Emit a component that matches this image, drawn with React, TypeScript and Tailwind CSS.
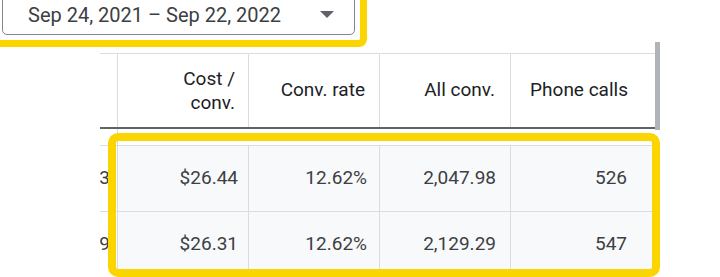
import React from "react";

const rows = [
  { prev: "1,048.43", cost: "$26.44", rate: "12.62%", all: "2,047.98", calls: "526" },
  { prev: "1,072.19", cost: "$26.31", rate: "12.62%", all: "2,129.29", calls: "547" },
];

export default function App() {
  return (
    <div className="relative w-[720px] h-[277px] overflow-hidden bg-white font-['Roboto',sans-serif] text-[#3c4043]">
      {/* Date range picker, highlighted */}
      <div className="-mt-[20px] -ml-[10px] w-fit rounded-br-[8px] border-[7px] border-[#fbd500] p-[5px]">
        <div className="w-[353px] h-[43px] rounded-[5px] border border-[#80868b] bg-white flex items-end justify-between pl-[25px] pr-[20px] pb-[6px]">
          <span className="text-[20px] leading-[26px] whitespace-nowrap">Sep 24, 2021 – Sep 22, 2022</span>
          <svg width="14" height="8" viewBox="0 0 14 8" className="mb-[9px]">
            <path d="M0 0 L14 0 L7 7 Z" fill="#5f6368" />
          </svg>
        </div>
      </div>

      {/* Table */}
      <div className="ml-[100px] mt-[6px] flex items-start">
        <div className="w-[555px] overflow-hidden text-[19px]">
          {/* Header */}
          <div className="flex h-[76px] border-t border-b-2 border-t-[#dadce0] border-b-[#5f6368]">
            <div className="w-[17px] shrink-0" />
            <div className="w-[131px] shrink-0 border-l border-[#dadce0] flex items-center justify-end pr-[13px] text-right leading-[24px] text-[#202124]">
              Cost /<br />conv.
            </div>
            <div className="w-[131px] shrink-0 border-l border-[#dadce0] flex items-center justify-end pr-[14px] text-[#202124]">
              Conv. rate
            </div>
            <div className="w-[131px] shrink-0 border-l border-[#dadce0] flex items-center justify-end pr-[15px] text-[#202124]">
              All conv.
            </div>
            <div className="w-[145px] shrink-0 border-l border-[#dadce0] flex items-center justify-end pr-[27px] text-[#202124]">
              Phone calls
            </div>
          </div>

          {/* Spacer row */}
          <div className="flex h-[17px] border-b border-[#dadce0]">
            <div className="w-[17px] shrink-0" />
            <div className="flex-1 border-l border-[#dadce0]" />
          </div>

          {rows.map((r) => (
            <div key={r.cost} className="flex h-[66px] border-b border-[#dadce0]">
              <div className="w-[17px] shrink-0 flex items-center justify-end pr-[7px] whitespace-nowrap">
                <span className="shrink-0">{r.prev}</span>
              </div>
              <div className="w-[131px] shrink-0 border-l border-[#dadce0] bg-[#f8f9fa] flex items-center justify-end pr-[10px]">
                {r.cost}
              </div>
              <div className="w-[131px] shrink-0 border-l border-[#dadce0] bg-[#f8f9fa] flex items-center justify-end pr-[12px]">
                {r.rate}
              </div>
              <div className="w-[131px] shrink-0 border-l border-[#dadce0] bg-[#f8f9fa] flex items-center justify-end pr-[14px]">
                {r.all}
              </div>
              <div className="w-[145px] shrink-0 border-l border-[#dadce0] bg-[#f8f9fa] flex items-center justify-end pr-[28px]">
                {r.calls}
              </div>
            </div>
          ))}
        </div>
        {/* Vertical scrollbar */}
        <div className="w-[5px] h-[88px] -mt-[11px] bg-[#b0b3b8]" />
      </div>

      {/* Highlight around rows */}
      <div className="absolute left-[108px] top-[133px] w-[552px] h-[144px] rounded-[10px] border-[8px] border-[#fbd500] pointer-events-none" />
    </div>
  );
}
